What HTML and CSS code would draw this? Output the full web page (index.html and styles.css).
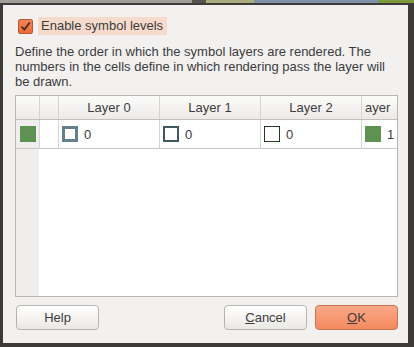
FILE: index.html
```html
<!DOCTYPE html>
<html lang="en">
<head>
    <meta charset="UTF-8">
    <meta name="viewport" content="width=device-width, initial-scale=1.0">
    <title>Symbol levels</title>
    <link rel="stylesheet" href="styles.css">
</head>
<body>
    <div class="desk">
        <span class="d-gray"></span>
        <span class="d-olive"></span>
        <span class="d-gray2"></span>
        <span class="d-blue"></span>
        <span class="d-green"></span>
    </div>
    <div class="dialog">
        <div class="check-row">
            <span class="checkbox">
                <svg width="11" height="11" viewBox="0 0 11 11"><path d="M1.5 5.5 L4.3 8.5 L9.8 1.5" fill="none" stroke="#4b2716" stroke-width="1.8"/></svg>
            </span>
            <span class="check-label">Enable symbol levels</span>
        </div>
        <p class="info">Define the order in which the symbol layers are rendered. The numbers in the cells define in which rendering pass the layer will be drawn.</p>

        <!-- levels table -->
        <div class="grid">
            <table>
                <tr class="head">
                    <th class="c-sym"></th>
                    <th class="c-name"></th>
                    <th class="c-layer">Layer 0</th>
                    <th class="c-layer">Layer 1</th>
                    <th class="c-layer">Layer 2</th>
                    <th class="c-last">ayer</th>
                </tr>
                <tr class="row">
                    <td class="c-sym"><span class="sw sw-green"></span></td>
                    <td class="c-name"></td>
                    <td><div class="cell"><span class="sw sw-thick"></span>0</div></td>
                    <td><div class="cell"><span class="sw sw-mid"></span>0</div></td>
                    <td><div class="cell"><span class="sw sw-thin"></span>0</div></td>
                    <td><div class="cell"><span class="sw sw-green"></span>1</div></td>
                </tr>
            </table>
        </div>

        <div class="buttons">
            <button class="btn">Help</button>
            <span class="spacer"></span>
            <button class="btn"><u>C</u>ancel</button>
            <button class="btn btn-ok"><u>O</u>K</button>
        </div>
    </div>
</body>
</html>
```

FILE: styles.css
```css
body{
    margin: 0;
    width: 414px;
    height: 347px;
    overflow: hidden;
    background-color: #3c3b37;
    font-family: "Liberation Sans", Arial, sans-serif;
    font-size: 13px;
    color: #3c3c3c;
}
.desk{
    display: flex;
    height: 3px;
}
.desk span{
    display: block;
    height: 3px;
}
.d-gray{ width: 192px; background: #a19e98; }
.d-olive{ width: 14px; background: #55534e; }
.d-gray2{ width: 48px; background: #a9ab7d; }
.d-blue{ width: 124px; background: #7f92a8; }
.d-green{ flex: 1; background: #7c9a3c; }

.dialog{
    margin: 2px 6px 0 3px;
    height: 338px;
    box-sizing: border-box;
    background-color: #f2f1f0;
    padding: 12px 10px 0 12px;
    display: flex;
    flex-direction: column;
}

/* checkbox */
.check-row{
    display: flex;
    align-items: center;
    height: 18px;
    margin-left: 3px;
}
.checkbox{
    width: 13px;
    height: 13px;
    border: 1px solid #b9582d;
    border-radius: 2px;
    background: linear-gradient(#f48356, #ec6b3a);
    display: flex;
    align-items: center;
    justify-content: center;
}
.check-label{
    margin-left: 5px;
    background-color: #f6dbcd;
    height: 18px;
    line-height: 18px;
    padding: 0 4px 0 3px;
}
.info{
    margin: 9px 0 0 0;
    line-height: 15px;
}

/* table */
.grid{
    margin-top: 6px;
    height: 202px;
    box-sizing: border-box;
    border: 1px solid #b9b7b3;
    background: linear-gradient(to right, #efeeec 23px, #ffffff 23px);
    overflow: hidden;
}
.grid table{
    border-collapse: collapse;
    table-layout: fixed;
    width: 381px;
}
.grid th, .grid td{
    padding: 0;
    border-left: 1px solid #d6d4d1;
    border-bottom: 1px solid #cac8c5;
    font-weight: normal;
}
.grid th:first-child, .grid td:first-child{
    border-left: none;
}
.head th{
    height: 23px;
    background: linear-gradient(#fbfbfa, #eceae8);
    text-align: center;
    border-bottom-color: #c3c1be;
}
.head th.c-last{
    text-align: left;
    padding-left: 3px;
}
.row td{
    height: 28px;
    background: #ffffff;
}
.row td.c-sym{
    background: #efeeec;
}
.c-sym{ width: 23px; }
.c-name{ width: 18px; }
.c-layer{ width: 100px; }
.cell{
    display: flex;
    align-items: center;
    gap: 6px;
    padding-left: 3px;
}
.c-sym .sw{
    display: block;
    margin: 0 auto;
}
.sw{
    width: 16px;
    height: 16px;
    box-sizing: border-box;
    background: #ffffff;
}
.sw-green{ background: #5f9153; }
.sw-thick{ border: 3px solid #62808d; }
.sw-mid{ border: 2px solid #3f5863; }
.sw-thin{ border: 1px solid #203a20; }

/* buttons */
.buttons{
    display: flex;
    gap: 8px;
    margin-top: 8px;
    margin-left: 1px;
}
.spacer{ flex: 1; }
.btn{
    width: 83px;
    height: 25px;
    font-family: "Liberation Sans", Arial, sans-serif;
    font-size: 13px;
    color: #3c3c3c;
    border: 1px solid #b6b3ae;
    border-radius: 4px;
    background: linear-gradient(#ffffff, #ebe9e6);
    padding: 0;
}
.btn-ok{
    border-color: #c9734f;
    background: linear-gradient(#fba98a, #f4895f);
}
```
